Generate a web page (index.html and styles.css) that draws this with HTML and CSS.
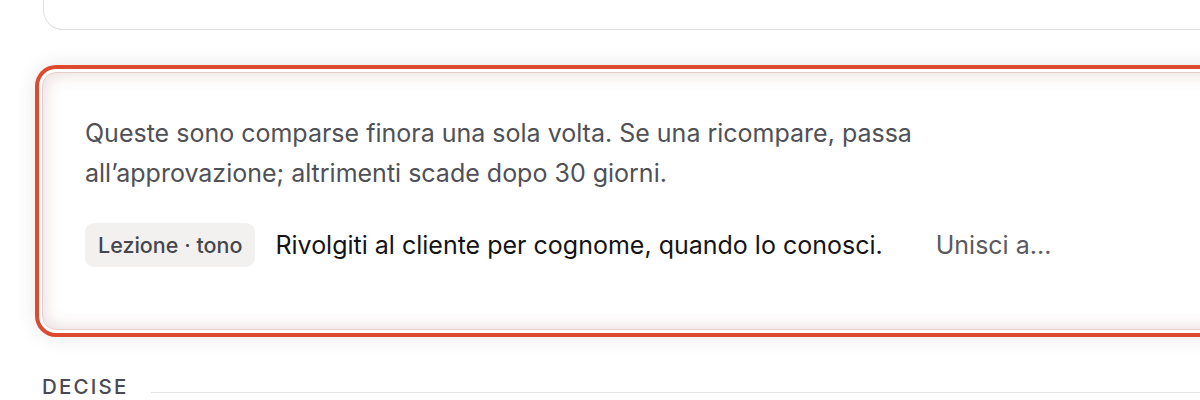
FILE: index.html
```html
<!DOCTYPE html>
<html lang="it">
<head>
<meta charset="utf-8">
<link rel="stylesheet" href="styles.css">
</head>
<body>
<div class="page">
  <div class="prev-card"></div>
  <section class="card card--focus">
    <p class="note">Queste sono comparse finora una sola volta. Se una ricompare, passa all’approvazione; altrimenti scade dopo 30 giorni.</p>
    <div class="row">
      <span class="pill">Lezione · tono</span>
      <span class="lesson">Rivolgiti al cliente per cognome, quando lo conosci.</span>
      <span class="merge">Unisci a...</span>
    </div>
  </section>
  <div class="section-head">
    <span class="section-title">DECISE</span>
    <span class="section-rule"></span>
  </div>
</div>
</body>
</html>
```

FILE: styles.css
```css
html, body {
  margin: 0;
  padding: 0;
  background: #ffffff;
  overflow: hidden;
}
body {
  font-family: Inter, "Noto Sans", sans-serif;
  width: 1200px;
  height: 400px;
}
.page {
  padding-left: 42px;
  margin-right: -60px;
}
.prev-card {
  height: 29px;
  border: 1px solid #e3e1de;
  border-top: none;
  border-radius: 0 0 20px 20px;
  margin-left: 1px;
}
.card {
  margin-top: 42px;
  height: 258px;
  box-sizing: border-box;
  border: 1px solid #e6cfcb;
  border-radius: 14px;
  padding: 40px 42px 0 42px;
  background: #fff;
  box-shadow:
    0 0 0 3px #ffffff,
    0 0 0 7px #dd4a2e,
    0 0 20px 8px rgba(0, 0, 0, 0.09),
    inset 0 0 18px rgba(150, 80, 80, 0.24);
}
.note {
  margin: 0;
  max-width: 860px;
  font-size: 25px;
  line-height: 40px;
  color: #505057;
}
.row {
  display: flex;
  align-items: center;
  margin-top: 30px;
}
.pill {
  background: #f2f1ef;
  border-radius: 9px;
  padding: 0 13px;
  height: 44px;
  line-height: 44px;
  font-size: 21.5px;
  font-weight: 500;
  color: #46464d;
}
.lesson {
  margin-left: 20px;
  font-size: 25px;
  color: #141416;
}
.merge {
  margin-left: 53px;
  font-size: 25px;
  color: #5a5a60;
}
.section-head {
  display: flex;
  align-items: center;
  margin-top: 44px;
}
.section-title {
  font-size: 20.5px;
  font-weight: 500;
  letter-spacing: 2.2px;
  color: #4a4a55;
}
.section-rule {
  flex: 1;
  height: 1px;
  background: #e6e4e1;
  margin-left: 22px;
  margin-top: 12px;
}
```
